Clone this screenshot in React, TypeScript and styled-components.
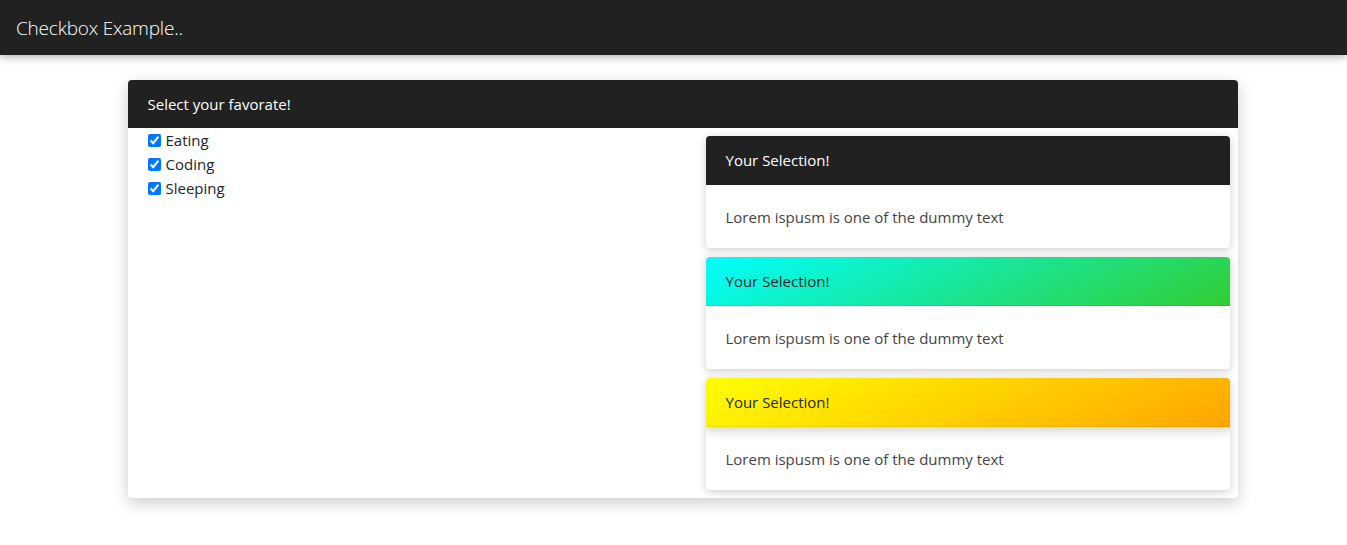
import styled, { createGlobalStyle } from "styled-components";

const GlobalStyle = createGlobalStyle`
  body {
    margin: 0;
    background: #fff;
    font-family: "Open Sans", "Noto Sans", Arial, sans-serif;
    font-size: 16px;
    line-height: 24px;
    color: #212529;
  }
  * { box-sizing: border-box; }
`;

const hobbies = ["Eating", "Coding", "Sleeping"];

type Variant = "dark" | "aqua" | "sun";

const selections: Variant[] = ["dark", "aqua", "sun"];

export default function App() {
  return (
    <>
      <GlobalStyle />
      <NavBar>
        <Brand>Checkbox Example..</Brand>
      </NavBar>
      <Page>
        <Container>
          <MainCard>
            <MainHeader>Select your favorate!</MainHeader>
            <MainBody>
              <CheckList>
                {hobbies.map((item) => (
                  <CheckItem key={item}>
                    <input type="checkbox" defaultChecked />
                    {item}
                  </CheckItem>
                ))}
              </CheckList>
              <SelectionList>
                {selections.map((v, ind) => (
                  <SelectionCard key={ind}>
                    <SelectionHeader variant={v}>Your Selection!</SelectionHeader>
                    <SelectionBody>Lorem ispusm is one of the dummy text</SelectionBody>
                  </SelectionCard>
                ))}
              </SelectionList>
            </MainBody>
          </MainCard>
        </Container>
      </Page>
    </>
  );
}

const NavBar = styled.nav`
  height: 55px;
  background: #212121;
  display: flex;
  align-items: center;
  padding: 0 16px;
  box-shadow: 0 2px 8px rgba(0, 0, 0, 0.3);
  position: relative;
  z-index: 2;
`;

const Brand = styled.span`
  color: #fff;
  font-size: 19px;
  font-weight: 300;
  letter-spacing: -0.2px;
`;

const Page = styled.div`
  padding: 25px 0 40px 18px;
`;

const Container = styled.main`
  width: 1110px;
  margin: 0 auto;
`;

const MainCard = styled.section`
  background: #fff;
  border-radius: 4px;
  overflow: hidden;
  box-shadow: 0 5px 16px rgba(0, 0, 0, 0.2);
`;

const MainHeader = styled.header`
  height: 48px;
  background: #212121;
  color: #fff;
  padding: 0 20px;
  display: flex;
  align-items: center;
  font-size: 15px;
`;

const MainBody = styled.div`
  display: grid;
  grid-template-columns: 1fr 524px;
  padding: 0 8px 8px 20px;
`;

const CheckList = styled.div`
  display: flex;
  flex-direction: column;
`;

const CheckItem = styled.label`
  display: flex;
  align-items: center;
  gap: 5px;
  height: 24px;
  font-size: 15px;
  color: #212529;

  input {
    margin: 0;
    width: 13px;
    height: 13px;
    accent-color: #0075ff;
  }
`;

const SelectionList = styled.div`
  display: flex;
  flex-direction: column;
  gap: 9px;
  padding-top: 8px;
`;

const SelectionCard = styled.article`
  border-radius: 4px;
  overflow: hidden;
  background: #fff;
  box-shadow: 0 2px 8px rgba(0, 0, 0, 0.2);
`;

const headerBg: Record<Variant, string> = {
  dark: "#212121",
  aqua: "linear-gradient(155deg, #00ffff, #32cd32)",
  sun: "linear-gradient(155deg, #ffff00, #ffa500)",
};

const SelectionHeader = styled.header<{ variant: Variant }>`
  height: 49px;
  display: flex;
  align-items: center;
  padding: 0 20px;
  font-size: 15px;
  background: ${(p) => headerBg[p.variant]};
  border-bottom: 1px solid rgba(0, 0, 0, 0.1);
  color: ${(p) => (p.variant === "dark" ? "#fff" : "#212529")};
  font-weight: ${(p) => (p.variant === "dark" ? 500 : 400)};
  position: relative;
  box-shadow: ${(p) => (p.variant === "sun" ? "0 4px 10px rgba(0,0,0,0.18)" : "none")};
`;

const SelectionBody = styled.div`
  height: 63px;
  display: flex;
  align-items: center;
  padding: 0 20px;
  font-size: 15px;
  color: #444;
`;
